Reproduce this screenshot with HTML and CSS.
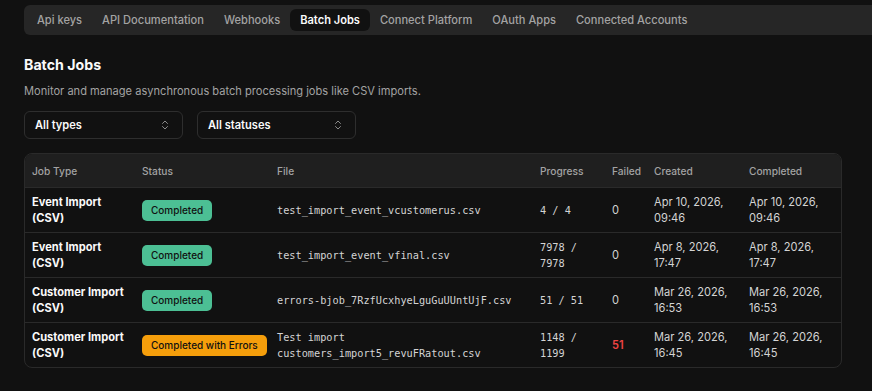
FILE: index.html
```html
<!DOCTYPE html>
<html lang="en">
<head>
  <meta charset="UTF-8">
  <meta name="viewport" content="width=device-width, initial-scale=1.0">
  <title>Batch Jobs</title>
  <link rel="stylesheet" href="styles.css">
</head>
<body>
  <div class="page">
    <nav class="tabs">
      <a class="tab">Api keys</a>
      <a class="tab">API Documentation</a>
      <a class="tab">Webhooks</a>
      <a class="tab active">Batch Jobs</a>
      <a class="tab">Connect Platform</a>
      <a class="tab">OAuth Apps</a>
      <a class="tab">Connected Accounts</a>
    </nav>

    <h2 class="title">Batch Jobs</h2>
    <p class="subtitle">Monitor and manage asynchronous batch processing jobs like CSV imports.</p>

    <div class="filters">
      <div class="select">
        <span>All types</span>
        <svg class="chevrons" width="8" height="10" viewBox="0 0 8 10"><path d="M1.5 3.5 4 1l2.5 2.5M1.5 6.5 4 9l2.5-2.5" fill="none" stroke="currentColor" stroke-width="1" stroke-linecap="round" stroke-linejoin="round"/></svg>
      </div>
      <div class="select">
        <span>All statuses</span>
        <svg class="chevrons" width="8" height="10" viewBox="0 0 8 10"><path d="M1.5 3.5 4 1l2.5 2.5M1.5 6.5 4 9l2.5-2.5" fill="none" stroke="currentColor" stroke-width="1" stroke-linecap="round" stroke-linejoin="round"/></svg>
      </div>
    </div>

    <div class="table-wrap">
      <table class="jobs">
        <colgroup>
          <col class="c-type">
          <col class="c-status">
          <col class="c-file">
          <col class="c-progress">
          <col class="c-failed">
          <col class="c-created">
          <col class="c-completed">
        </colgroup>
        <thead>
          <tr>
            <th>Job Type</th>
            <th>Status</th>
            <th>File</th>
            <th>Progress</th>
            <th>Failed</th>
            <th>Created</th>
            <th>Completed</th>
          </tr>
        </thead>
        <tbody>
          <tr>
            <td class="type">Event Import (CSV)</td>
            <td><span class="badge ok">Completed</span></td>
            <td class="mono">test_import_event_vcustomerus.csv</td>
            <td class="mono">4 / 4</td>
            <td>0</td>
            <td>Apr 10, 2026, 09:46</td>
            <td>Apr 10, 2026, 09:46</td>
          </tr>
          <tr>
            <td class="type">Event Import (CSV)</td>
            <td><span class="badge ok">Completed</span></td>
            <td class="mono">test_import_event_vfinal.csv</td>
            <td class="mono">7978 / 7978</td>
            <td>0</td>
            <td>Apr 8, 2026, 17:47</td>
            <td>Apr 8, 2026, 17:47</td>
          </tr>
          <tr>
            <td class="type">Customer Import (CSV)</td>
            <td><span class="badge ok">Completed</span></td>
            <td class="mono">errors-bjob_7RzfUcxhyeLguGuUUntUjF.csv</td>
            <td class="mono">51 / 51</td>
            <td>0</td>
            <td>Mar 26, 2026, 16:53</td>
            <td>Mar 26, 2026, 16:53</td>
          </tr>
          <tr>
            <td class="type">Customer Import (CSV)</td>
            <td><span class="badge warn">Completed with Errors</span></td>
            <td class="mono">Test import customers_import5_revuFRatout.csv</td>
            <td class="mono">1148 / 1199</td>
            <td class="failed">51</td>
            <td>Mar 26, 2026, 16:45</td>
            <td>Mar 26, 2026, 16:45</td>
          </tr>
        </tbody>
      </table>
    </div>
  </div>
</body>
</html>
```

FILE: styles.css
```css
html, body {
  margin: 0;
  padding: 0;
  background-color: #111111;
  font-family: Inter, "Noto Sans", sans-serif;
  color: #e5e5e5;
  overflow: hidden;
}

.page {
  padding: 5px 0 0 24px;
}

/* Top tab strip runs off the right edge */
.tabs {
  display: flex;
  align-items: center;
  height: 30px;
  padding: 0 3px;
  margin-right: -40px;
  background-color: #262626;
  border-radius: 6px;
}

.tab {
  padding: 0 10px;
  height: 22px;
  line-height: 22px;
  font-size: 11.1px;
  font-weight: 500;
  color: #a3a3a3;
  border-radius: 6px;
  white-space: nowrap;
}

.tab.active {
  background-color: #111111;
  color: #fafafa;
  font-weight: 600;
}

.title {
  margin: 20px 0 0;
  font-size: 14.2px;
  line-height: 20px;
  font-weight: 700;
  color: #fafafa;
}

.subtitle {
  margin: 8px 0 0;
  font-size: 11.1px;
  line-height: 16px;
  color: #a3a3a3;
}

.filters {
  display: flex;
  gap: 14px;
  margin-top: 12px;
}

.select {
  display: flex;
  align-items: center;
  justify-content: space-between;
  box-sizing: border-box;
  width: 159px;
  height: 28px;
  padding: 0 13px 0 10px;
  border: 1px solid #2e2e2e;
  border-radius: 6px;
  font-size: 11.1px;
  font-weight: 600;
  color: #fafafa;
}

.chevrons {
  color: #8a8a8a;
}

.table-wrap {
  width: 818px;
  box-sizing: border-box;
  margin-top: 14px;
  border: 1px solid #2a2a2a;
  border-radius: 8px;
  overflow: hidden;
}

.jobs {
  width: 100%;
  table-layout: fixed;
  border-collapse: collapse;
}

.c-type { width: 110px; }
.c-status { width: 135px; }
.c-file { width: 263px; }
.c-progress { width: 72px; }
.c-failed { width: 42px; }
.c-created { width: 95px; }
.c-completed { width: 99px; }

.jobs th {
  background-color: #1f1f1f;
  height: 33px;
  padding: 0 7px;
  text-align: left;
  font-size: 10.2px;
  font-weight: 500;
  color: #a3a3a3;
  border-bottom: 1px solid #2a2a2a;
}

.jobs td {
  padding: 6px 7px;
  font-size: 11.1px;
  line-height: 16px;
  color: #d4d4d4;
  vertical-align: middle;
  border-bottom: 1px solid #2a2a2a;
}

.jobs tbody tr:last-child td {
  border-bottom: none;
}

.jobs td.type {
  font-weight: 700;
  color: #fafafa;
}

.jobs td.mono {
  font-family: "DejaVu Sans Mono", monospace;
  font-size: 10.25px;
}

.jobs td.failed {
  color: #ef4444;
  font-weight: 600;
}

.badge {
  display: inline-block;
  height: 21px;
  line-height: 21px;
  padding: 0 9px;
  border-radius: 5px;
  font-size: 10px;
  font-weight: 500;
  color: #111111;
  white-space: nowrap;
}

.badge.ok {
  background-color: #4cbf94;
}

.badge.warn {
  background-color: #f59e0b;
}
```
